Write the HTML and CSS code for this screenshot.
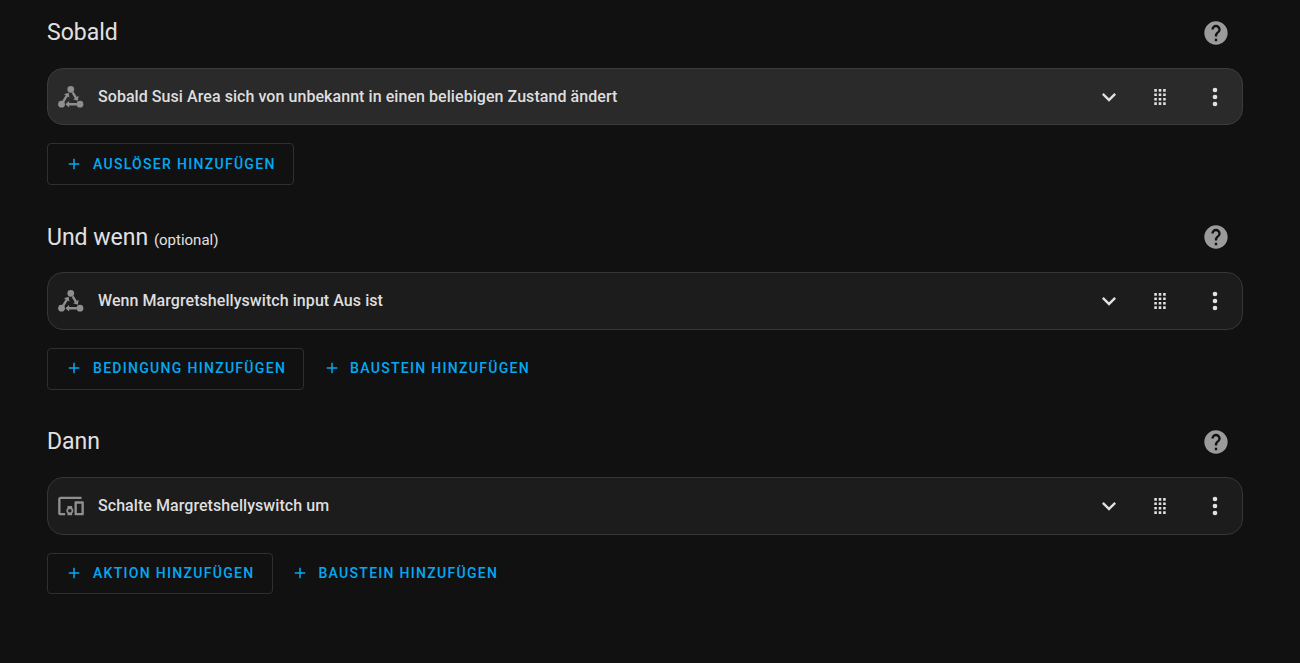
FILE: index.html
```html
<!DOCTYPE html>
<html lang="de">
<head>
<meta charset="utf-8">
<title>Automation</title>
<link rel="stylesheet" href="styles.css">
</head>
<body>
<svg class="defs" width="0" height="0" aria-hidden="true">
  <defs>
    <symbol id="i-help" viewBox="0 0 24 24"><path d="M15.07,11.25L14.17,12.17C13.45,12.89 13,13.5 13,15H11V14.5C11,13.39 11.45,12.39 12.17,11.67L13.41,10.41C13.78,10.05 14,9.55 14,9C14,7.89 13.1,7 12,7A2,2 0 0,0 10,9H8A4,4 0 0,1 12,5A4,4 0 0,1 16,9C16,9.88 15.64,10.67 15.07,11.25M13,19H11V17H13M12,2A10,10 0 0,0 2,12A10,10 0 0,0 12,22A10,10 0 0,0 22,12C22,6.47 17.5,2 12,2Z"/></symbol>
    <symbol id="i-chevron" viewBox="0 0 24 24"><path d="M7.41,8.58L12,13.17L16.59,8.58L18,10L12,16L6,10L7.41,8.58Z"/></symbol>
    <symbol id="i-dots" viewBox="0 0 24 24"><path d="M12,16A2,2 0 0,1 14,18A2,2 0 0,1 12,20A2,2 0 0,1 10,18A2,2 0 0,1 12,16M12,10A2,2 0 0,1 14,12A2,2 0 0,1 12,14A2,2 0 0,1 10,12A2,2 0 0,1 12,10M12,4A2,2 0 0,1 14,6A2,2 0 0,1 12,8A2,2 0 0,1 10,6A2,2 0 0,1 12,4Z"/></symbol>
    <symbol id="i-plus" viewBox="0 0 24 24"><path d="M19,13H13V19H11V13H5V11H11V5H13V11H19V13Z"/></symbol>
    <symbol id="i-drag" viewBox="0 0 24 24"><path d="M7.1 5.2h2.2v2.2H7.1zM10.9 5.2h2.2v2.2h-2.2zM14.7 5.2h2.2v2.2h-2.2zM7.1 9h2.2v2.2H7.1zM10.9 9h2.2v2.2h-2.2zM14.7 9h2.2v2.2h-2.2zM7.1 12.8h2.2V15H7.1zM10.9 12.8h2.2V15h-2.2zM14.7 12.8h2.2V15h-2.2zM7.1 16.6h2.2v2.2H7.1zM10.9 16.6h2.2v2.2h-2.2zM14.7 16.6h2.2v2.2h-2.2z"/></symbol>
    <symbol id="i-devices" viewBox="0 0 24 24"><path d="M3 6H21V4H3C1.9 4 1 4.9 1 6V18C1 19.1 1.9 20 3 20H7V18H3V6M13 12H9V13.78C8.39 14.33 8 15.11 8 16C8 16.89 8.39 17.67 9 18.22V20H13V18.22C13.61 17.67 14 16.88 14 16S13.61 14.33 13 13.78V12M11 17.5C10.17 17.5 9.5 16.83 9.5 16S10.17 14.5 11 14.5 12.5 15.17 12.5 16 11.83 17.5 11 17.5M22 8H16C15.5 8 15 8.5 15 9V19C15 19.5 15.5 20 16 20H22C22.5 20 23 19.5 23 19V9C23 8.5 22.5 8 22 8M21 18H17V10H21V18Z"/></symbol>
    <symbol id="i-state" viewBox="0 0 24 24"><circle cx="11.8" cy="5.4" r="2.9"/><circle cx="3.9" cy="18.2" r="2.9"/><circle cx="19.7" cy="18.2" r="2.9"/><path d="M7.2 18.2L10.4 15.4V17.2H17V19.2H10.4V21ZM17.84 15.19L13.78 13.93 15.31 12.99 12.53 8.48 14.23 7.42 17.01 11.93 18.54 10.99ZM10 8.4L10.68 12.58 9.15 11.63 6.21 16.4 4.51 15.34 7.45 10.57 5.92 9.62Z"/></symbol>
  </defs>
</svg>
<main class="page">
  <section class="section">
    <header class="head">
      <h2 class="title">Sobald</h2>
      <svg class="help"><use href="#i-help"/></svg>
    </header>
    <div class="card card-active">
      <svg class="lead"><use href="#i-state"/></svg>
      <span class="label">Sobald Susi Area sich von unbekannt in einen beliebigen Zustand ändert</span>
      <svg class="ctl"><use href="#i-chevron"/></svg>
      <svg class="ctl ctl-drag"><use href="#i-drag"/></svg>
      <svg class="ctl ctl-menu"><use href="#i-dots"/></svg>
    </div>
    <div class="actions">
      <button class="btn outlined"><svg class="plus"><use href="#i-plus"/></svg>Auslöser hinzufügen</button>
    </div>
  </section>
  <section class="section">
    <header class="head">
      <h2 class="title">Und wenn <small class="opt">(optional)</small></h2>
      <svg class="help"><use href="#i-help"/></svg>
    </header>
    <div class="card">
      <svg class="lead"><use href="#i-state"/></svg>
      <span class="label">Wenn Margretshellyswitch input Aus ist</span>
      <svg class="ctl"><use href="#i-chevron"/></svg>
      <svg class="ctl ctl-drag"><use href="#i-drag"/></svg>
      <svg class="ctl ctl-menu"><use href="#i-dots"/></svg>
    </div>
    <div class="actions">
      <button class="btn outlined"><svg class="plus"><use href="#i-plus"/></svg>Bedingung hinzufügen</button>
      <button class="btn ghost"><svg class="plus"><use href="#i-plus"/></svg>Baustein hinzufügen</button>
    </div>
  </section>
  <section class="section">
    <header class="head">
      <h2 class="title">Dann</h2>
      <svg class="help"><use href="#i-help"/></svg>
    </header>
    <div class="card">
      <svg class="lead"><use href="#i-devices"/></svg>
      <span class="label">Schalte Margretshellyswitch um</span>
      <svg class="ctl"><use href="#i-chevron"/></svg>
      <svg class="ctl ctl-drag"><use href="#i-drag"/></svg>
      <svg class="ctl ctl-menu"><use href="#i-dots"/></svg>
    </div>
    <div class="actions">
      <button class="btn outlined"><svg class="plus"><use href="#i-plus"/></svg>Aktion hinzufügen</button>
      <button class="btn ghost"><svg class="plus"><use href="#i-plus"/></svg>Baustein hinzufügen</button>
    </div>
  </section>
</main>
</body>
</html>
```
FILE: styles.css
```css
* { box-sizing: border-box; }
html, body { margin: 0; height: 100%; overflow: hidden; }
body { background: #111111; color: #e1e1e1; font-family: Roboto, sans-serif; }
.defs { position: absolute; }
.page { padding: 7.8px 57px 0 47px; display: flex; flex-direction: column; gap: 27.4px; }
.section { display: flex; flex-direction: column; }
.head { display: flex; align-items: center; justify-content: space-between; height: 48px; margin-bottom: 12px; padding-right: 13.5px; }
.title { margin: 0; padding-top: 2px; font-size: 23px; font-weight: 400; color: #e1e1e1; }
.opt { font-size: 15px; font-weight: 400; }
.help { width: 28px; height: 28px; fill: #9b9b9b; margin-top: 2px; }
.card { display: flex; align-items: center; height: 57.6px; padding: 0 13.3px 0 9px; background: #1c1c1c; border: 1px solid #363636; border-radius: 16px; }
.card-active { background: #2a2a2a; border-color: #3c3c3c; }
.lead { width: 28px; height: 28px; fill: #8f8f8f; margin-right: 13px; flex: none; }
.label { flex: 1; padding-bottom: 1px; font-size: 16px; font-weight: 500; color: #dedede; letter-spacing: .06px; }
.ctl { width: 28px; height: 28px; fill: #e1e1e1; flex: none; }
.ctl-drag { margin-left: 22.3px; }
.ctl-menu { margin-left: 27px; }
.actions { display: flex; gap: .8px; margin-top: 18px; }
.btn { display: inline-flex; align-items: center; height: 41.6px; padding: 0 17.2px 1px 20px; background: transparent; border: 1px solid transparent; border-radius: 4px; color: #03a9f4; font: 500 14px Roboto, sans-serif; letter-spacing: 1.3px; text-transform: uppercase; }
.outlined { border-color: #2f2f2f; }
.plus { width: 18px; height: 18px; fill: #03a9f4; margin-right: 10px; margin-left: -3px; }
.ghost .plus { margin-right: 9px; }
```
